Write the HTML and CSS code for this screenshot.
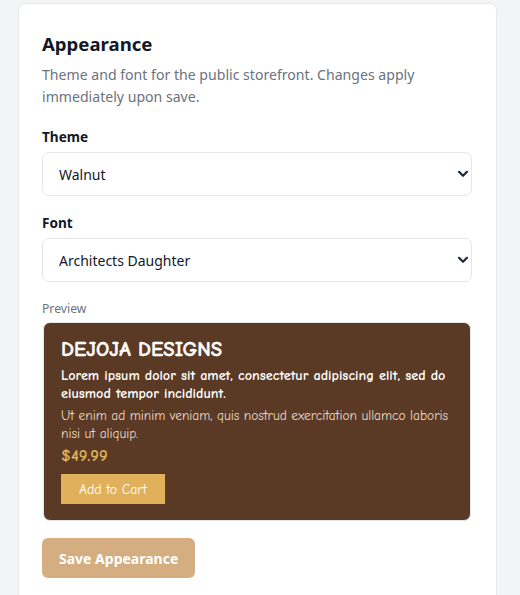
FILE: index.html
```html
<!DOCTYPE html>
<html lang="en">
<head>
<meta charset="utf-8">
<title>Appearance</title>
<link rel="stylesheet" href="styles.css">
</head>
<body>
<div class="page">
  <section class="card">
    <h2 class="title">Appearance</h2>
    <p class="desc">Theme and font for the public storefront. Changes apply immediately upon save.</p>

    <div class="field">
      <label class="label" for="theme">Theme</label>
      <div class="select-wrap">
        <select id="theme" class="select">
          <option>Walnut</option>
        </select>
        <svg class="chev" width="12" height="8" viewBox="0 0 12 8"><path d="M2 1.8 L6 5.8 L10 1.8" fill="none" stroke="#1f2937" stroke-width="2.2" stroke-linecap="round" stroke-linejoin="round"/></svg>
      </div>
    </div>

    <div class="field">
      <label class="label" for="font">Font</label>
      <div class="select-wrap">
        <select id="font" class="select">
          <option>Architects Daughter</option>
        </select>
        <svg class="chev" width="12" height="8" viewBox="0 0 12 8"><path d="M2 1.8 L6 5.8 L10 1.8" fill="none" stroke="#1f2937" stroke-width="2.2" stroke-linecap="round" stroke-linejoin="round"/></svg>
      </div>
    </div>

    <div class="preview-label">Preview</div>
    <div class="preview">
      <div class="pv-title">DEJOJA DESIGNS</div>
      <p class="pv-lead">Lorem ipsum dolor sit amet, consectetur adipiscing elit, sed do eiusmod tempor incididunt.</p>
      <p class="pv-text">Ut enim ad minim veniam, quis nostrud exercitation ullamco laboris nisi ut aliquip.</p>
      <div class="pv-price">$49.99</div>
      <button class="pv-btn" type="button">Add to Cart</button>
    </div>

    <button class="save" type="button">Save Appearance</button>
  </section>
</div>
</body>
</html>
```

FILE: styles.css
```css
* { box-sizing: border-box; }
html, body { margin: 0; padding: 0; }
body {
  background: #f3f4f6;
  font-family: "Noto Sans", "Open Sans", sans-serif;
  color: #111827;
}
.page {
  padding: 3px 23px 0 18px;
}
.card {
  background: #fff;
  border: 1px solid #e5e7eb;
  border-radius: 7px;
  padding: 26px 24px 40px 23px;
  min-height: 600px;
}
.title {
  margin: 0;
  font-size: 18.6px;
  font-weight: 700;
  line-height: 28px;
  color: #111827;
}
.desc {
  margin: 6px 0 0;
  font-size: 14.1px;
  line-height: 22px;
  color: #6b7280;
  padding-right: 40px;
}
.field { margin-top: 19px; display: flex; flex-direction: column; }
.field + .field { margin-top: 17px; }
.label {
  font-size: 13.6px;
  font-weight: 700;
  line-height: 20px;
  margin-bottom: 5px;
  color: #111827;
}
.select-wrap { position: relative; }
.select {
  -webkit-appearance: none;
  appearance: none;
  width: 100%;
  height: 44px;
  border: 1px solid #e5e7eb;
  border-radius: 7px;
  background: #fff;
  padding: 0 16px;
  font-family: "Noto Sans", "Open Sans", sans-serif;
  font-size: 14px;
  color: #111827;
}
.chev {
  position: absolute;
  right: 3px;
  top: 18px;
  pointer-events: none;
}
.preview-label {
  margin-top: 18px;
  font-size: 12.2px;
  line-height: 18px;
  color: #6b7280;
}
.preview {
  margin-top: 4px;
  margin-left: 1px;
  margin-right: 1px;
  background: #5a3a24;
  border: 1px solid #e5e7eb;
  border-radius: 7px;
  padding: 14px 17px 16px;
  font-family: "Comic Sans MS", "Comic Neue", "DejaVu Sans", cursive;
  color: #fff;
}
.pv-title {
  font-size: 20.8px;
  font-weight: 700;
  line-height: 24px;
  -webkit-text-stroke: 0.4px #fff;
}
.pv-lead {
  margin: 6px 0 0;
  font-size: 14.2px;
  font-weight: 700;
  line-height: 18px;
}
.pv-text {
  margin: 4px 0 0;
  font-size: 13.4px;
  line-height: 18px;
  color: #ead9c8;
}
.pv-price {
  margin-top: 3px;
  font-size: 16.5px;
  font-weight: 700;
  line-height: 20px;
  color: #e0b05a;
}
.pv-btn {
  margin-top: 8px;
  display: block;
  border: 0;
  border-radius: 0;
  background: #e0b05a;
  color: #fff;
  font-family: "Comic Sans MS", "Comic Neue", "DejaVu Sans", cursive;
  font-size: 13.8px;
  height: 30px;
  padding: 0 18px;
}
.save {
  margin-top: 17px;
  display: block;
  border: 0;
  border-radius: 6px;
  background: #d4ae80;
  color: #fff;
  font-family: "Noto Sans", "Open Sans", sans-serif;
  font-size: 14px;
  font-weight: 700;
  height: 40px;
  padding: 0 17px;
}
```
